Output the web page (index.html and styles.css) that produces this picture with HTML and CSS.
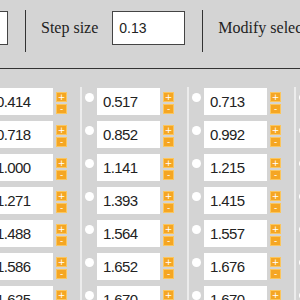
FILE: index.html
```html
<!doctype html>
<html><head><meta charset="utf-8"/><meta name="viewport" content="width=device-width, initial-scale=1"/>
<link rel="stylesheet" href="styles.css">
<title>Steps</title>
</head>
<body>
	<div class="toolbar">
		<input class="field" type="text" value="">
		<span class="sep"></span>
		<label class="lbl">Step size</label>
		<input class="field" type="text" value="0.13">
		<span class="sep"></span>
		<label class="lbl">Modify selected</label>
	</div>

	<div class="grid">
		<div class="col">
			<div class="cell"><span class="radio"></span><input class="val" value="0.414"><div class="steps"><button class="step">+</button><button class="step">-</button></div></div>
			<div class="cell"><span class="radio"></span><input class="val" value="0.718"><div class="steps"><button class="step">+</button><button class="step">-</button></div></div>
			<div class="cell"><span class="radio"></span><input class="val" value="1.000"><div class="steps"><button class="step">+</button><button class="step">-</button></div></div>
			<div class="cell"><span class="radio"></span><input class="val" value="1.271"><div class="steps"><button class="step">+</button><button class="step">-</button></div></div>
			<div class="cell"><span class="radio"></span><input class="val" value="1.488"><div class="steps"><button class="step">+</button><button class="step">-</button></div></div>
			<div class="cell"><span class="radio"></span><input class="val" value="1.586"><div class="steps"><button class="step">+</button><button class="step">-</button></div></div>
			<div class="cell"><span class="radio"></span><input class="val" value="1.625"><div class="steps"><button class="step">+</button><button class="step">-</button></div></div>
		</div>
		<div class="col">
			<div class="cell"><span class="radio"></span><input class="val" value="0.517"><div class="steps"><button class="step">+</button><button class="step">-</button></div></div>
			<div class="cell"><span class="radio"></span><input class="val" value="0.852"><div class="steps"><button class="step">+</button><button class="step">-</button></div></div>
			<div class="cell"><span class="radio"></span><input class="val" value="1.141"><div class="steps"><button class="step">+</button><button class="step">-</button></div></div>
			<div class="cell"><span class="radio"></span><input class="val" value="1.393"><div class="steps"><button class="step">+</button><button class="step">-</button></div></div>
			<div class="cell"><span class="radio"></span><input class="val" value="1.564"><div class="steps"><button class="step">+</button><button class="step">-</button></div></div>
			<div class="cell"><span class="radio"></span><input class="val" value="1.652"><div class="steps"><button class="step">+</button><button class="step">-</button></div></div>
			<div class="cell"><span class="radio"></span><input class="val" value="1.670"><div class="steps"><button class="step">+</button><button class="step">-</button></div></div>
		</div>
		<div class="col">
			<div class="cell"><span class="radio"></span><input class="val" value="0.713"><div class="steps"><button class="step">+</button><button class="step">-</button></div></div>
			<div class="cell"><span class="radio"></span><input class="val" value="0.992"><div class="steps"><button class="step">+</button><button class="step">-</button></div></div>
			<div class="cell"><span class="radio"></span><input class="val" value="1.215"><div class="steps"><button class="step">+</button><button class="step">-</button></div></div>
			<div class="cell"><span class="radio"></span><input class="val" value="1.415"><div class="steps"><button class="step">+</button><button class="step">-</button></div></div>
			<div class="cell"><span class="radio"></span><input class="val" value="1.557"><div class="steps"><button class="step">+</button><button class="step">-</button></div></div>
			<div class="cell"><span class="radio"></span><input class="val" value="1.676"><div class="steps"><button class="step">+</button><button class="step">-</button></div></div>
			<div class="cell"><span class="radio"></span><input class="val" value="1.670"><div class="steps"><button class="step">+</button><button class="step">-</button></div></div>
		</div>
		<div class="col">
			<div class="cell"><span class="radio"></span><input class="val" value=""></div>
			<div class="cell"><span class="radio"></span><input class="val" value=""></div>
			<div class="cell"><span class="radio"></span><input class="val" value=""></div>
			<div class="cell"><span class="radio"></span><input class="val" value=""></div>
			<div class="cell"><span class="radio"></span><input class="val" value=""></div>
			<div class="cell"><span class="radio"></span><input class="val" value=""></div>
			<div class="cell"><span class="radio"></span><input class="val" value=""></div>
		</div>
	</div>
</body>
</html>
```

FILE: styles.css
```css
* { box-sizing:border-box; }
html, body { margin:0; padding:0; background-color:#d4d4d4; overflow:hidden; }
body { width:300px; height:300px; }

.toolbar { display:flex; align-items:flex-start; height:69px; margin-left:-65px; padding-top:10px; border-bottom:1px solid #333; width:600px; }
.field { width:73px; height:34px; margin:1px 0 0 0; padding:0 0 0 6px; border:1px solid #444; background-color:white; font-family:"Liberation Sans", Arial, sans-serif; font-size:14px; color:#222; outline:none; }
.sep { width:1px; height:42px; margin:0 15px 0 17px; background-color:#333; }
.lbl { margin:1px 14px 0 0; line-height:34px; font-family:"Liberation Serif", "Times New Roman", serif; font-size:16px; color:#222; white-space:nowrap; }

.grid { display:flex; margin-left:-27px; padding-top:18px; width:700px; }
.col { width:107px; flex:none; border-left:2px solid #ececec; padding:1px 0 0 3px; }
.cell { display:flex; align-items:flex-start; height:27px; margin-bottom:6px; }
.radio { width:9px; height:9px; margin:5px 3px 0 0; border-radius:50%; background-color:white; flex:none; }
.val { width:63px; height:27px; margin:0; padding:0 0 0 6px; border:none; background-color:white; font-family:"Liberation Sans", Arial, sans-serif; font-size:15px; letter-spacing:-0.6px; color:#222; outline:none; }
.steps { display:flex; flex-direction:column; gap:2px; margin:4px 0 0 3px; }
.step { width:11px; height:10px; margin:0; padding:0; border:1px solid #fbc65e; background-color:#f5a623; color:white; font-family:"DejaVu Sans", sans-serif; font-size:9px; line-height:8px; text-align:center; }
```
